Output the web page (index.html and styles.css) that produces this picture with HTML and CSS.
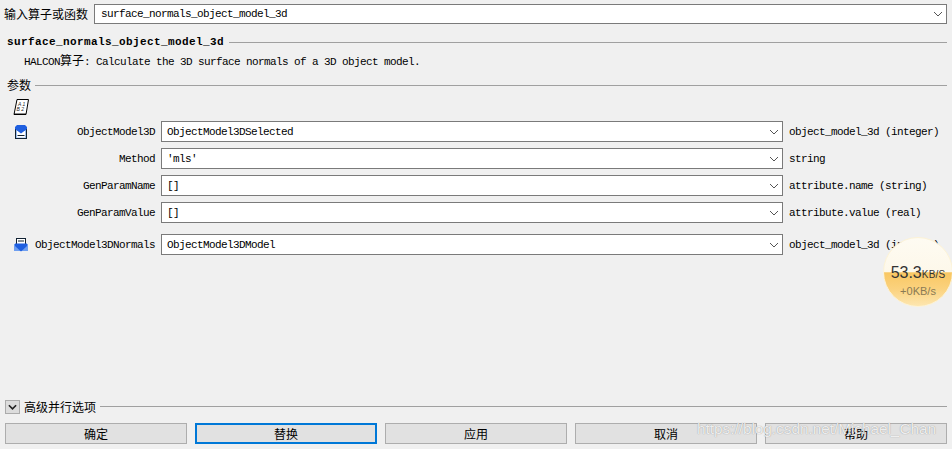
FILE: index.html
```html
<!DOCTYPE html>
<html lang="zh">
<head>
<meta charset="utf-8">
<title>HALCON</title>
<link rel="stylesheet" href="styles.css">
</head>
<body>
<div class="dialog">
  <div class="top-row">
    <label class="cjk">输入算子或函数</label>
    <div class="field top-field"><span>surface_normals_object_model_3d</span><svg class="chev" viewBox="0 0 10 6"><path d="M1 1l4 4 4-4"/></svg></div>
  </div>
  <div class="title-row"><b>surface_normals_object_model_3d</b><i class="rule"></i></div>
  <div class="desc">HALCON<span class="cjk">算子</span>: Calculate the 3D surface normals of a 3D object model.</div>
  <div class="section-row"><span class="cjk">参数</span><i class="rule"></i></div>
  <div class="sheet-icon">
    <svg viewBox="0 0 16 16" width="16" height="16"><path d="M4 .5h11.500l-2.500 15H1z" fill="#fff" stroke="#000"/><path d="M1 15.300h12" stroke="#000" stroke-width="1.500"/><text x="5" y="6.500" class="sheet-text">A 1</text><text x="3.500" y="12" class="sheet-text">B 2</text></svg>
  </div>
  <div class="params">
    <div class="param">
      <svg class="pico" viewBox="0 0 14 14"><rect x="1.500" y="2.500" width="11" height="11" fill="#9fc0f0" stroke="#123"/><rect x="3" y="6" width="8" height="6.500" fill="#fff"/><path d="M1 2l2-2h8l2 2v2L7 8.500 1 4z" fill="#1f5fe0"/><path d="M3.500 10.500h7" stroke="#123"/></svg>
      <span class="name">ObjectModel3D</span>
      <div class="field"><span>ObjectModel3DSelected</span><svg class="chev" viewBox="0 0 10 6"><path d="M1 1l4 4 4-4"/></svg></div>
      <span class="kind">object_model_3d (integer)</span>
    </div>
    <div class="param">
      <span></span>
      <span class="name">Method</span>
      <div class="field"><span>'mls'</span><svg class="chev" viewBox="0 0 10 6"><path d="M1 1l4 4 4-4"/></svg></div>
      <span class="kind">string</span>
    </div>
    <div class="param">
      <span></span>
      <span class="name">GenParamName</span>
      <div class="field"><span>[]</span><svg class="chev" viewBox="0 0 10 6"><path d="M1 1l4 4 4-4"/></svg></div>
      <span class="kind">attribute.name (string)</span>
    </div>
    <div class="param">
      <span></span>
      <span class="name">GenParamValue</span>
      <div class="field"><span>[]</span><svg class="chev" viewBox="0 0 10 6"><path d="M1 1l4 4 4-4"/></svg></div>
      <span class="kind">attribute.value (real)</span>
    </div>
    <div class="param output">
      <svg class="pico" viewBox="0 0 14 14"><rect x="2.500" y=".5" width="9" height="9" fill="#fff" stroke="#123"/><path d="M4 3h6" stroke="#123"/><rect x="0" y="6" width="14" height="7" fill="#6f9ff0"/><path d="M1 5.500h12V8l-6 5.500L1 8z" fill="#1f5fe0"/></svg>
      <span class="name">ObjectModel3DNormals</span>
      <div class="field"><span>ObjectModel3DModel</span><svg class="chev" viewBox="0 0 10 6"><path d="M1 1l4 4 4-4"/></svg></div>
      <span class="kind">object_model_3d (integer)</span>
    </div>
  </div>
  <div class="spacer"></div>
  <div class="advanced">
    <span class="toggle"><svg viewBox="0 0 10 6" width="9" height="6"><path d="M1 1l4 4 4-4"/></svg></span>
    <span class="cjk">高级并行选项</span>
    <i class="rule"></i>
  </div>
  <div class="buttons">
    <button class="btn">确定</button>
    <button class="btn active">替换</button>
    <button class="btn">应用</button>
    <button class="btn">取消</button>
    <button class="btn">帮助</button>
  </div>
</div>
<div class="speed">
  <div class="speed-top">53.3<small>KB/S</small></div>
  <div class="speed-sub">+0KB/s</div>
</div>
<div class="watermark">https://blog.csdn.net/Michael_Chan</div>
</body>
</html>
```
FILE: styles.css
```css
* { box-sizing: border-box; }
html, body { margin: 0; height: 100%; }
body {
  background: #f0f0f0;
  color: #000;
  font: 11px/14px "Liberation Mono", "Noto Sans CJK SC", monospace;
  letter-spacing: -0.6px;
  overflow: hidden;
  position: relative;
}
.cjk {
  font: 12px/16px "Noto Sans CJK SC", sans-serif;
  letter-spacing: 0;
}
.dialog {
  height: 449px;
  padding: 4px 5px 5px;
  display: flex;
  flex-direction: column;
}
.top-row {
  display: flex;
  align-items: center;
  gap: 7px;
  margin-left: -1px;
}
.top-row label { width: 83px; white-space: nowrap; }
.field {
  height: 21px;
  background: #fff;
  border: 1px solid #7a7a7a;
  display: flex;
  align-items: center;
  justify-content: space-between;
  padding: 0 3px 0 5px;
}
.top-field { flex: 1; height: 20px; padding-left: 6px; }
.chev {
  width: 10px;
  height: 6px;
  fill: none;
  stroke: #555;
  stroke-width: 1;
}
.title-row {
  display: flex;
  align-items: center;
  gap: 5px;
  margin: 11px 0 0 2px;
  height: 14px;
}
.title-row b {
  font-weight: 700;
  letter-spacing: 0.4px;
}
.rule {
  flex: 1;
  height: 1px;
  background: #a0a0a0;
  display: block;
}
.desc {
  margin: 3px 0 0 19px;
  height: 16px;
  line-height: 16px;
}
.section-row {
  display: flex;
  align-items: center;
  gap: 4px;
  margin: 8px 0 0 2px;
  height: 18px;
}
.sheet-icon {
  margin: 5px 0 0 8px;
  height: 16px;
}
.sheet-text {
  font: italic 5px "Liberation Sans", sans-serif;
  letter-spacing: 0;
  fill: #222;
}
.params {
  margin-top: 6px;
  display: flex;
  flex-direction: column;
  gap: 6px;
}
.param {
  display: grid;
  grid-template-columns: 14px 133px 622px 1fr;
  align-items: center;
  height: 21px;
  padding-left: 9px;
}
.param.output { margin-top: 5px; }
.pico { width: 14px; height: 14px; }
.name {
  text-align: right;
  padding-right: 6px;
  white-space: nowrap;
}
.kind { padding-left: 6px; white-space: nowrap; }
.spacer { flex: 1; }
.advanced {
  display: flex;
  align-items: center;
  height: 16px;
  margin-bottom: 8px;
}
.advanced .rule { margin-bottom: 2px; }
.toggle {
  width: 15px;
  height: 14px;
  background: #dcdcdc;
  border: 1px solid #ababab;
  display: flex;
  align-items: center;
  justify-content: center;
  margin-right: 4px;
}
.toggle svg { fill: none; stroke: #222; stroke-width: 1.800; }
.advanced .cjk { margin-right: 4px; }
.buttons {
  display: grid;
  grid-template-columns: repeat(5, 182px);
  gap: 8px;
}
.btn {
  height: 21px;
  background: #e1e1e1;
  border: 1px solid #adadad;
  padding: 0;
  font: 12px/16px "Noto Sans CJK SC", sans-serif;
  color: #000;
}
.btn.active { border: 2px solid #0078d7; }
.speed {
  position: absolute;
  left: 883px;
  top: 237px;
  width: 70px;
  height: 70px;
  border-radius: 50%;
  border: 1px solid #fdf3d6;
  background: linear-gradient(#fefbf2 0, #fdf8ea 50%, #f9c763 51%, #fbd27e 75%, #fde6b0 100%);
  font-family: "Liberation Sans", sans-serif;
  letter-spacing: 0;
  text-align: center;
}
.speed-top {
  margin-top: 26px;
  font-size: 16px;
  line-height: 18px;
  color: #333;
  white-space: nowrap;
}
.speed-top small { font-size: 10px; letter-spacing: .2px; }
.speed-sub {
  font-size: 11px;
  line-height: 14px;
  color: #8a7a55;
}
.watermark {
  position: absolute;
  left: 697px;
  top: 417px;
  font: 15.300px/24px "Liberation Sans", sans-serif;
  letter-spacing: 0;
  color: rgba(255,255,255,.85);
  text-shadow: 0 0 1px rgba(110,110,110,.8);
  white-space: nowrap;
  pointer-events: none;
}
```
